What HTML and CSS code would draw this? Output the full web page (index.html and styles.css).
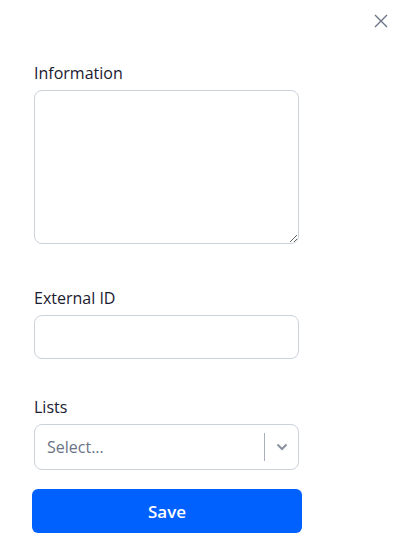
FILE: index.html
```html
<!DOCTYPE html>
<html>
<head>
<meta charset="utf-8">
<link rel="stylesheet" href="styles.css">
</head>
<body>
<div class="panel">
  <div class="topbar">
    <button class="close" aria-label="Close">
      <svg width="14" height="14" viewBox="0 0 14 14"><path d="M1 1L13 13M13 1L1 13" stroke="#6b7385" stroke-width="1.4" fill="none"/></svg>
    </button>
  </div>
  <form class="form">
    <div class="field field-info">
      <label class="label">Information</label>
      <textarea class="textarea"></textarea>
    </div>
    <div class="field field-ext">
      <label class="label">External ID</label>
      <input class="input" type="text">
    </div>
    <div class="field field-lists">
      <label class="label">Lists</label>
      <div class="select">
        <span class="placeholder">Select...</span>
        <span class="sep"></span>
        <svg class="chev" width="12" height="8" viewBox="0 0 12 8"><path d="M1.5 1.5L6 6L10.5 1.5" stroke="#8a919e" stroke-width="2" fill="none"/></svg>
      </div>
    </div>
    <button class="save" type="button">Save</button>
  </form>
</div>
</body>
</html>
```
FILE: styles.css
```css
* { box-sizing: border-box; }
html, body { margin: 0; padding: 0; background: #fff; }
body { font-family: "Open Sans", "Noto Sans", sans-serif; color: #1a2030; }
.panel { width: 404px; height: 559px; position: relative; }
.topbar { height: 62px; display: flex; justify-content: flex-end; align-items: flex-start; padding: 14px 16px 0 0; }
.close { background: none; border: 0; padding: 0; width: 14px; height: 14px; display: flex; cursor: pointer; }
.form { padding-left: 34px; }
.label { display: block; font-size: 16px; line-height: 22px; margin-bottom: 6px; color: #1a2030; }
.field-info { margin-bottom: 43px; }
.field-ext { margin-bottom: 37px; }
.field-lists { margin-bottom: 19px; }
.textarea { display: block; width: 265px; height: 154px; border: 1px solid #cbd2dc; border-radius: 8px; resize: vertical; font-family: inherit; margin: 0; }
.input { display: block; width: 265px; height: 44px; border: 1px solid #cbd2dc; border-radius: 8px; font-family: inherit; margin: 0; }
.select { width: 265px; height: 46px; border: 1px solid #cbd2dc; border-radius: 8px; display: flex; align-items: center; padding-left: 12px; }
.placeholder { flex: 1; font-size: 16px; color: #6b7385; }
.sep { width: 1px; height: 28px; background: #a9b0bb; }
.chev { margin: 0 10px 0 11px; }
.save { display: block; margin-left: -2px; width: 270px; height: 44px; border: 0; border-radius: 6px; background: #0061fe; color: #fff; font-family: inherit; font-size: 17px; font-weight: 600; cursor: pointer; }
```
